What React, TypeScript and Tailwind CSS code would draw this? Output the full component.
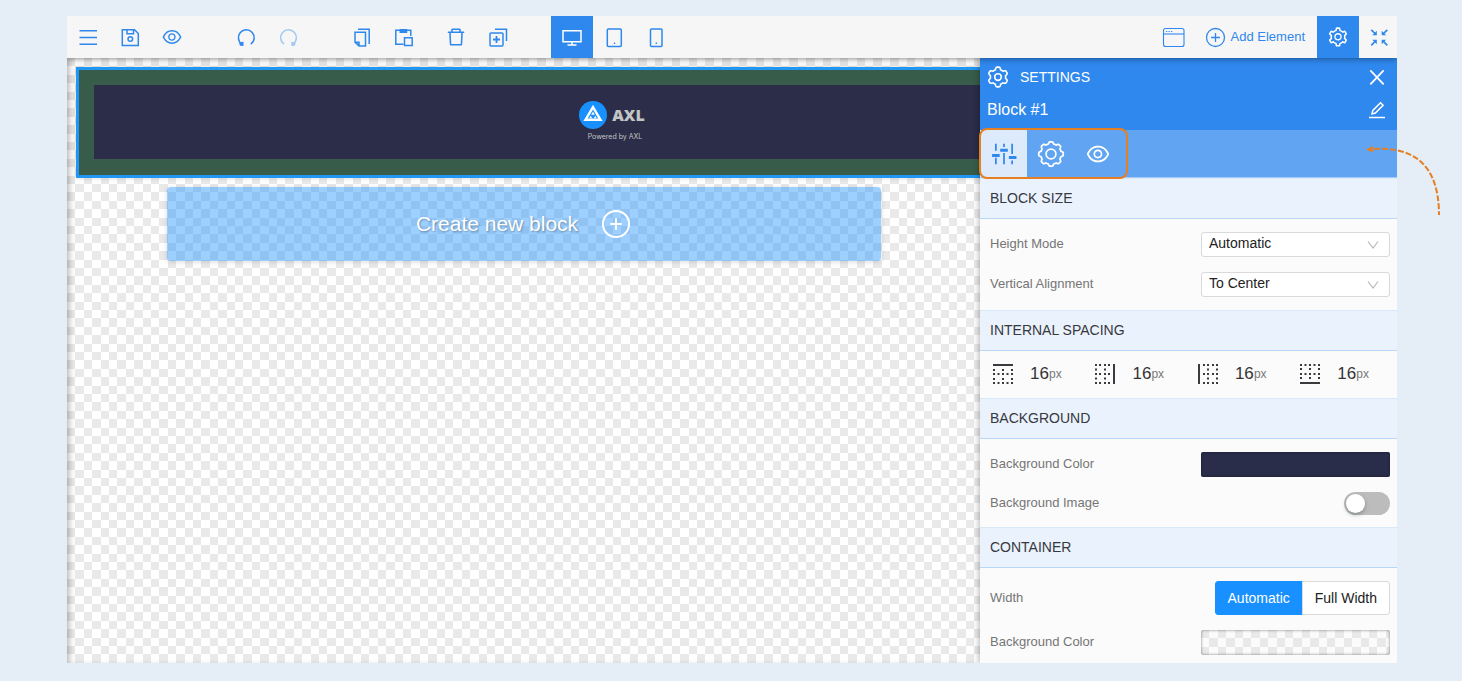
import { useState, type ReactNode } from 'react';
import { AiOutlineEye, AiOutlineSetting, AiOutlineDelete } from 'react-icons/ai';

// Evenly lobed gear outline around (12, 12)
function gearPath(teeth: number, outer: number, inner: number) {
  const pts: string[] = [];
  const steps = teeth * 24;
  for (let i = 0; i < steps; i++) {
    const a = (i / steps) * Math.PI * 2;
    const wave = Math.max(-1, Math.min(1, Math.cos(a * teeth) * 1.8));
    const r = (outer + inner) / 2 + ((outer - inner) / 2) * wave;
    pts.push(`${(12 + r * Math.sin(a)).toFixed(2)} ${(12 - r * Math.cos(a)).toFixed(2)}`);
  }
  return `M${pts.join('L')}Z`;
}

interface IconProps {
  children: ReactNode;
  className?: string;
  width?: number;
}

function Icon({ children, className = 'size-6', width = 1.5 }: IconProps) {
  return (
    <svg viewBox="0 0 24 24" className={className} fill="none" stroke="currentColor" strokeWidth={width} aria-hidden="true">
      {children}
    </svg>
  );
}

const icons = {
  menu: (
    <Icon>
      <path d="M3.500 5.700h17.500M3.500 12.500h17.500M3.500 19.300h17.500" />
    </Icon>
  ),
  save: (
    <Icon>
      <path d="M4.300 4.700h12.200l3.800 3.800v12H4.300zM9 4.700v4h6.500v-4" />
      <circle cx="12.300" cy="14" r="2.300" />
    </Icon>
  ),
  undo: (
    <Icon width={1.6}>
      <path d="M8 19.300A7.900 7.900 0 1 1 16.800 19.200" />
      <path d="M5 17.500l4.500-.7v4.200l-3.500-.3z" fill="currentColor" stroke="none" />
    </Icon>
  ),
  redo: (
    <Icon width={1.6}>
      <path d="M16.800 19.300A7.900 7.900 0 1 0 8 19.200" />
      <path d="M19.800 17.500l-4.500-.7v4.200l3.500-.3z" fill="currentColor" stroke="none" />
    </Icon>
  ),
  copy: (
    <Icon>
      <path d="M8 4.200h11.200V19" />
      <path d="M9 21h6.500V7.200H5v10zM5 17.200h4V21" />
      <path d="M5 17.200h4V21z" fill="currentColor" fillOpacity="0.5" stroke="none" />
    </Icon>
  ),
  paste: (
    <Icon>
      <path d="M11.500 19.300H3.800V5.300H8M15 5.300h3.800V11" />
      <path d="M8.300 4.700h6.200v2.600H8.300z" fill="currentColor" />
      <path d="M12.500 12.800h7.700v7.700h-7.700z" />
    </Icon>
  ),
  duplicate: (
    <Icon>
      <path d="M9 4.200h11.500V16" />
      <rect x="4" y="8" width="13" height="13" rx="1" />
      <path d="M10.500 11v7M7 14.500h7" strokeWidth="1.800" />
    </Icon>
  ),
  desktop: (
    <Icon>
      <path d="M3 5.700h18v11H3zM12 16.700v3M7.500 20h9" />
    </Icon>
  ),
  tablet: (
    <Icon>
      <rect x="5.300" y="4" width="14" height="17.500" rx="1" />
      <path d="M11.800 18.300h1.400" />
    </Icon>
  ),
  mobile: (
    <Icon>
      <rect x="6.500" y="4" width="11.500" height="17.500" rx="1" />
      <path d="M11.600 18.300h1.400" />
    </Icon>
  ),
  browser: (
    <Icon width={1.1}>
      <rect x="1.500" y="3.500" width="20.500" height="18" rx="2" />
      <path d="M1.500 9h20.500" />
      <path d="M4 6.500h1.200M6.500 6.500h1.200M9 6.500h1.200" />
    </Icon>
  ),
  shrink: (
    <Icon width={1.7}>
      <path d="M4.300 4.800L9 9.500M20.300 4.800L15.500 9.500M4.300 20.300L9 15.500M20.300 20.300L15.500 15.500" />
      <path d="M9.800 5.800v4.400H5.300zM14.700 5.800v4.400h4.500zM9.800 19.200v-4.400H5.300zM14.700 19.200v-4.400h4.500z" fill="currentColor" stroke="none" />
    </Icon>
  ),
};

interface ToolProps {
  label: string;
  children: ReactNode;
  active?: boolean;
  disabled?: boolean;
}

function Tool({ label, children, active, disabled }: ToolProps) {
  return (
    <button
      type="button"
      aria-label={label}
      disabled={disabled}
      className={`flex h-[42px] w-[42px] shrink-0 items-center justify-center disabled:opacity-40 ${
        active ? 'bg-[#2f88ed] text-white' : 'text-[#2f88ed]'
      }`}
    >
      {children}
    </button>
  );
}

// One tile is five checker periods wide
const edges = [0, 8, 17, 25, 34, 42, 50, 59, 67, 76, 84];

function Checker({ id }: { id: string }) {
  return (
    <svg className="absolute inset-0 size-full" aria-hidden="true">
      <defs>
        <pattern id={id} width="84" height="84" patternUnits="userSpaceOnUse">
          {edges.slice(0, -1).flatMap((x, i) =>
            edges.slice(0, -1).map((y, j) =>
              (i + j) % 2 === 0 ? (
                <rect key={`${i}-${j}`} x={x} y={y} width={edges[i + 1] - x} height={edges[j + 1] - y} fill="#e9e9e9" />
              ) : null,
            ),
          )}
        </pattern>
      </defs>
      <rect width="100%" height="100%" fill={`url(#${id})`} />
    </svg>
  );
}

function Toolbar() {
  return (
    <header className="relative z-20 flex h-[42px] shrink-0 items-center justify-between bg-[#f6f6f6] shadow-[0_1px_6px_rgba(0,0,0,0.4)]">
      <div className="flex">
        <Tool label="Menu">{icons.menu}</Tool>
        <Tool label="Save">{icons.save}</Tool>
        <Tool label="Preview">
          <AiOutlineEye className="size-[22px]" />
        </Tool>
        <div className="ml-8 flex">
          <Tool label="Undo">{icons.undo}</Tool>
          <Tool label="Redo" disabled>
            {icons.redo}
          </Tool>
        </div>
        <div className="ml-8 flex">
          <Tool label="Copy">{icons.copy}</Tool>
          <Tool label="Paste">{icons.paste}</Tool>
        </div>
        <div className="ml-2.5 flex">
          <Tool label="Delete">
            <AiOutlineDelete className="size-[22px]" />
          </Tool>
          <Tool label="Duplicate">{icons.duplicate}</Tool>
        </div>
        <div className="ml-8 flex">
          <Tool label="Desktop view" active>
            {icons.desktop}
          </Tool>
          <Tool label="Tablet view">{icons.tablet}</Tool>
          <Tool label="Mobile view">{icons.mobile}</Tool>
        </div>
      </div>
      <div className="flex">
        <Tool label="Page frame">{icons.browser}</Tool>
        <button type="button" className="flex h-[42px] items-center gap-1 pr-3 pl-2 text-[13px] text-[#2f88ed]">
          <Icon width={1.3}>
            <circle cx="12.500" cy="12.500" r="9" />
            <path d="M12.500 8v9M8 12.500h9" />
          </Icon>
          Add Element
        </button>
        <Tool label="Settings" active>
          <AiOutlineSetting className="size-[22px]" />
        </Tool>
        <button type="button" aria-label="Exit full screen" className="flex h-[42px] w-[38px] items-center justify-center pl-0.5 text-[#2f88ed]">
          {icons.shrink}
        </button>
      </div>
    </header>
  );
}

function Canvas() {
  return (
    <main className="relative min-w-0 flex-1 overflow-hidden bg-white pt-[9px]">
      <Checker id="canvas-checker" />
      <div className="pointer-events-none absolute inset-0 shadow-[inset_5px_0_6px_-3px_rgba(0,0,0,0.3)]" />
      <section className="relative ml-[9px] w-[1072px] border-3 border-[#2196f3] bg-[#375c4a] px-[15px] pt-[15px] pb-4 shadow-[0_0_5px_rgba(0,0,0,0.15)]">
        <div className="flex h-[74px] flex-col items-center bg-[#2b2d49] pt-4">
          <div className="flex items-center gap-[5px]">
            <svg viewBox="0 0 28 28" className="size-7" aria-hidden="true">
              <circle cx="14" cy="14" r="14" fill="#1890ff" />
              <path d="M14 6.200L21.500 18.800h-15z" fill="none" stroke="#fff" strokeWidth="2.400" />
              <path d="M14 10.500l1.800 3.200h-3.600zM11.700 14.700l1.500 2.600h-3zM16.300 14.700l1.500 2.600h-3z" fill="#fff" />
            </svg>
            <span className="font-['Open_Sans',sans-serif] text-base leading-[26px] font-extrabold text-[#c4c4c4]">AXL</span>
          </div>
          <span className="mt-0.5 pl-1.5 font-['Inter',sans-serif] text-[7px] leading-3 text-[#c4c4c4]">Powered by AXL</span>
        </div>
      </section>
      <div className="relative mt-[9px] pr-[99px] pl-[100px]">
        <button
          type="button"
          className="flex h-[74px] w-full items-center justify-center gap-[22px] rounded bg-[#1890ff]/42 text-[21px] text-white shadow-[0_1px_5px_rgba(0,0,0,0.15)]"
        >
          <span className="[text-shadow:1px_1px_2px_rgba(0,0,0,0.3)]">Create new block</span>
          <Icon className="size-8" width={1.5}>
            <circle cx="12" cy="12" r="9.800" />
            <path d="M12 7.700v8.600M7.700 12h8.600" />
          </Icon>
        </button>
      </div>
    </main>
  );
}

function SectionTitle({ children }: { children: ReactNode }) {
  return (
    <h2 className="flex h-[41px] shrink-0 items-center border-t border-b border-t-[#d9e9f9] border-b-[#b8d7f7] bg-[#eaf3fd] px-2.5 text-[14px] text-[#38383f]">
      {children}
    </h2>
  );
}

interface SelectRowProps {
  id: string;
  label: string;
  options: string[];
}

function SelectRow({ id, label, options }: SelectRowProps) {
  return (
    <div className="flex h-[25px] items-center justify-between">
      <label htmlFor={id} className="pb-0.5">
        {label}
      </label>
      <div className="relative w-[189px]">
        <select
          id={id}
          className="block h-[25px] w-full appearance-none rounded-[3px] border border-[#d9d9d9] bg-white px-[7px] pb-0.5 text-[14px] text-[#222]"
        >
          {options.map((o) => (
            <option key={o}>{o}</option>
          ))}
        </select>
        <svg viewBox="0 0 12 8" className="pointer-events-none absolute top-[9px] right-[11px] h-2 w-3" fill="none" stroke="#b8b8b8" strokeWidth="1.200" aria-hidden="true">
          <path d="M1 .5l5 6.500 5-6.500" />
        </svg>
      </div>
    </div>
  );
}

// Dotted square with one solid edge, drawn for the top side and turned for the rest
const sides = [
  { side: 'Top', turn: 0 },
  { side: 'Right', turn: 90 },
  { side: 'Left', turn: 270 },
  { side: 'Bottom', turn: 180 },
];

function SpacingField({ side, turn }: { side: string; turn: number }) {
  return (
    <label className="flex items-center">
      <svg viewBox="0 0 20 20" className="size-5" aria-hidden="true">
        <g transform={`rotate(${turn} 10 10)`} fill="#3a3a3f">
          <rect width="20" height="2" />
          {[5, 9, 14, 18].flatMap((y) =>
            [0, 4.5, 9, 13.5, 18].map((x) =>
              (y === 5 || y === 14) && (x === 4.5 || x === 13.5) ? null : (
                <rect key={`${x}-${y}`} x={x} y={y} width="2" height="2" />
              ),
            ),
          )}
        </g>
      </svg>
      <input
        type="text"
        aria-label={`${side} spacing`}
        defaultValue="16"
        className="ml-[17px] w-[19px] bg-transparent text-[17px] text-[#333]"
      />
      <span className="text-[12px] text-[#777]">px</span>
    </label>
  );
}

function SettingsPanel() {
  const [image, setImage] = useState(false);
  const [width, setWidth] = useState('Automatic');

  return (
    <aside className="relative z-10 flex w-[417px] shrink-0 flex-col bg-[#fbfbfb] text-[13px] text-[#757575] shadow-[-1px_0_6px_rgba(0,0,0,0.3)]">
      <div className="flex h-[72px] shrink-0 flex-col bg-[#2f88ed] px-[7px] pt-[3px] text-white">
        <div className="flex h-8 items-center">
          <Icon className="size-[22px]" width={1.8}>
            <path d={gearPath(6, 10.8, 8.3)} />
            <circle cx="12" cy="12" r="3.600" />
          </Icon>
          <h1 className="ml-[11px] flex-1 text-[14px]">SETTINGS</h1>
          <button type="button" aria-label="Close" className="mr-[5px]">
            <Icon className="size-4" width={2.7}>
              <path d="M2 2l20 21M22 2L2 23" />
            </Icon>
          </button>
        </div>
        <div className="flex h-[34px] items-center justify-between text-[16px]">
          Block #1
          <button type="button" aria-label="Rename block" className="mr-1">
            <svg viewBox="0 0 18 18" className="size-[18px]" fill="none" stroke="currentColor" strokeWidth="1.500" aria-hidden="true">
              <path d="M4 13l.8-3.500L12.500 1.700l2.600 2.600-7.700 7.700z" />
              <path d="M1 16.500h16" />
            </svg>
          </button>
        </div>
      </div>

      <div className="relative flex h-12 shrink-0 border-b border-[#a8cdf8] bg-[#60a4f2] text-white" role="tablist">
        <button type="button" role="tab" aria-selected="true" aria-label="Layout" className="flex w-[47px] items-center justify-center bg-[#dceafb] text-[#2f88ed]">
          <Icon className="size-[26px]" width={1.6}>
            <path d="M4.500 2.500V9M4.500 15.500v6M12 2.500V5.500M12 11v10.500M19.500 2.500V12M19.500 18v3.500" />
            <path d="M1 13.300h7M8.500 8.600h7M16.500 15.300h7" strokeWidth="2.800" />
          </Icon>
        </button>
        <button type="button" role="tab" aria-selected="false" aria-label="Options" className="flex w-[47px] items-center justify-center">
          <Icon className="size-7" width={1.5}>
            <path d={gearPath(8, 10.5, 8.8)} />
            <circle cx="12" cy="12" r="4.200" />
          </Icon>
        </button>
        <button type="button" role="tab" aria-selected="false" aria-label="Visibility" className="flex w-[47px] items-center justify-center">
          <AiOutlineEye className="size-[26px]" />
        </button>
        <div className="pointer-events-none absolute -top-[2px] -left-px h-[51px] w-[149px] rounded-lg border-2 border-[#e67e22]" />
      </div>

      <SectionTitle>BLOCK SIZE</SectionTitle>
      <div className="flex flex-col gap-[15px] py-[13px] pr-[7px] pl-2.5">
        <SelectRow id="height-mode" label="Height Mode" options={['Automatic', 'Fixed']} />
        <SelectRow id="vertical-alignment" label="Vertical Alignment" options={['To Center', 'To Top', 'To Bottom']} />
      </div>

      <SectionTitle>INTERNAL SPACING</SectionTitle>
      <div className="flex h-[47px] shrink-0 items-center justify-between pr-7 pb-px pl-[13px]">
        {sides.map((s) => (
          <SpacingField key={s.side} {...s} />
        ))}
      </div>

      <SectionTitle>BACKGROUND</SectionTitle>
      <div className="flex flex-col gap-3.5 pt-[13px] pr-[7px] pb-3 pl-2.5">
        <div className="flex h-[25px] items-center justify-between">
          <span id="bg-color" className="pb-0.5">
            Background Color
          </span>
          <button type="button" aria-labelledby="bg-color" className="h-[25px] w-[189px] rounded-xs bg-[#2a2d49] shadow-[inset_0_0_3px_rgba(0,0,0,0.4)]" />
        </div>
        <div className="flex h-6 items-center justify-between">
          <label htmlFor="bg-image">Background Image</label>
          <span className="relative h-[23px] w-[46px]">
            <input
              id="bg-image"
              type="checkbox"
              role="switch"
              checked={image}
              onChange={(e) => setImage(e.target.checked)}
              className="peer block h-[23px] w-[46px] appearance-none rounded-full bg-[#bcbcbc] checked:bg-[#1890ff]"
            />
            <span className="pointer-events-none absolute top-0.5 left-0.5 size-[19px] rounded-full bg-white shadow-[0_2px_4px_rgba(0,35,11,0.3)] peer-checked:left-[25px]" />
          </span>
        </div>
      </div>

      <SectionTitle>CONTAINER</SectionTitle>
      <div className="flex flex-col gap-[15px] pt-[13px] pr-[7px] pl-2.5">
        <fieldset className="flex h-[34px] items-center justify-between">
          <span>Width</span>
          <div className="flex text-[14px]">
            {['Automatic', 'Full Width'].map((w) => (
              <label
                key={w}
                className={`flex h-[34px] items-center border px-3 first:rounded-l-[3px] last:-ml-px last:rounded-r-[3px] ${
                  width === w ? 'border-[#1890ff] bg-[#1890ff] text-white' : 'border-[#d9d9d9] bg-white text-[#222]'
                }`}
              >
                <input type="radio" name="container-width" value={w} checked={width === w} onChange={() => setWidth(w)} className="sr-only" />
                {w}
              </label>
            ))}
          </div>
        </fieldset>
        <div className="flex h-[25px] items-center justify-between">
          <span id="container-color" className="pb-0.5">
            Background Color
          </span>
          <button type="button" aria-labelledby="container-color" className="relative h-[25px] w-[189px] overflow-hidden rounded-xs">
            <Checker id="swatch-checker" />
            <span className="absolute inset-0 rounded-xs shadow-[inset_0_0_3px_rgba(0,0,0,0.5)]" />
          </button>
        </div>
      </div>
    </aside>
  );
}

export default function App() {
  return (
    <div className="flex h-screen flex-col bg-[#e5edf6] pt-4 pr-[65px] pb-[18px] pl-[67px] font-['Liberation_Sans',Arial,sans-serif]">
      <div className="relative flex min-h-0 flex-1 flex-col">
        <div className="flex min-h-0 flex-1 flex-col overflow-hidden">
          <Toolbar />
          <div className="flex min-h-0 flex-1">
            <Canvas />
            <SettingsPanel />
          </div>
        </div>
        <svg viewBox="0 0 80 72" className="pointer-events-none absolute top-[128px] -right-[48px] z-30 h-[72px] w-20" fill="none" aria-hidden="true">
          <path d="M9 5C44 3 74 16 74 71" stroke="#e67e22" strokeWidth="2" strokeDasharray="6 2" />
          <path d="M1 5.500l7-3.500v6.500z" fill="#e67e22" />
        </svg>
      </div>
    </div>
  );
}
